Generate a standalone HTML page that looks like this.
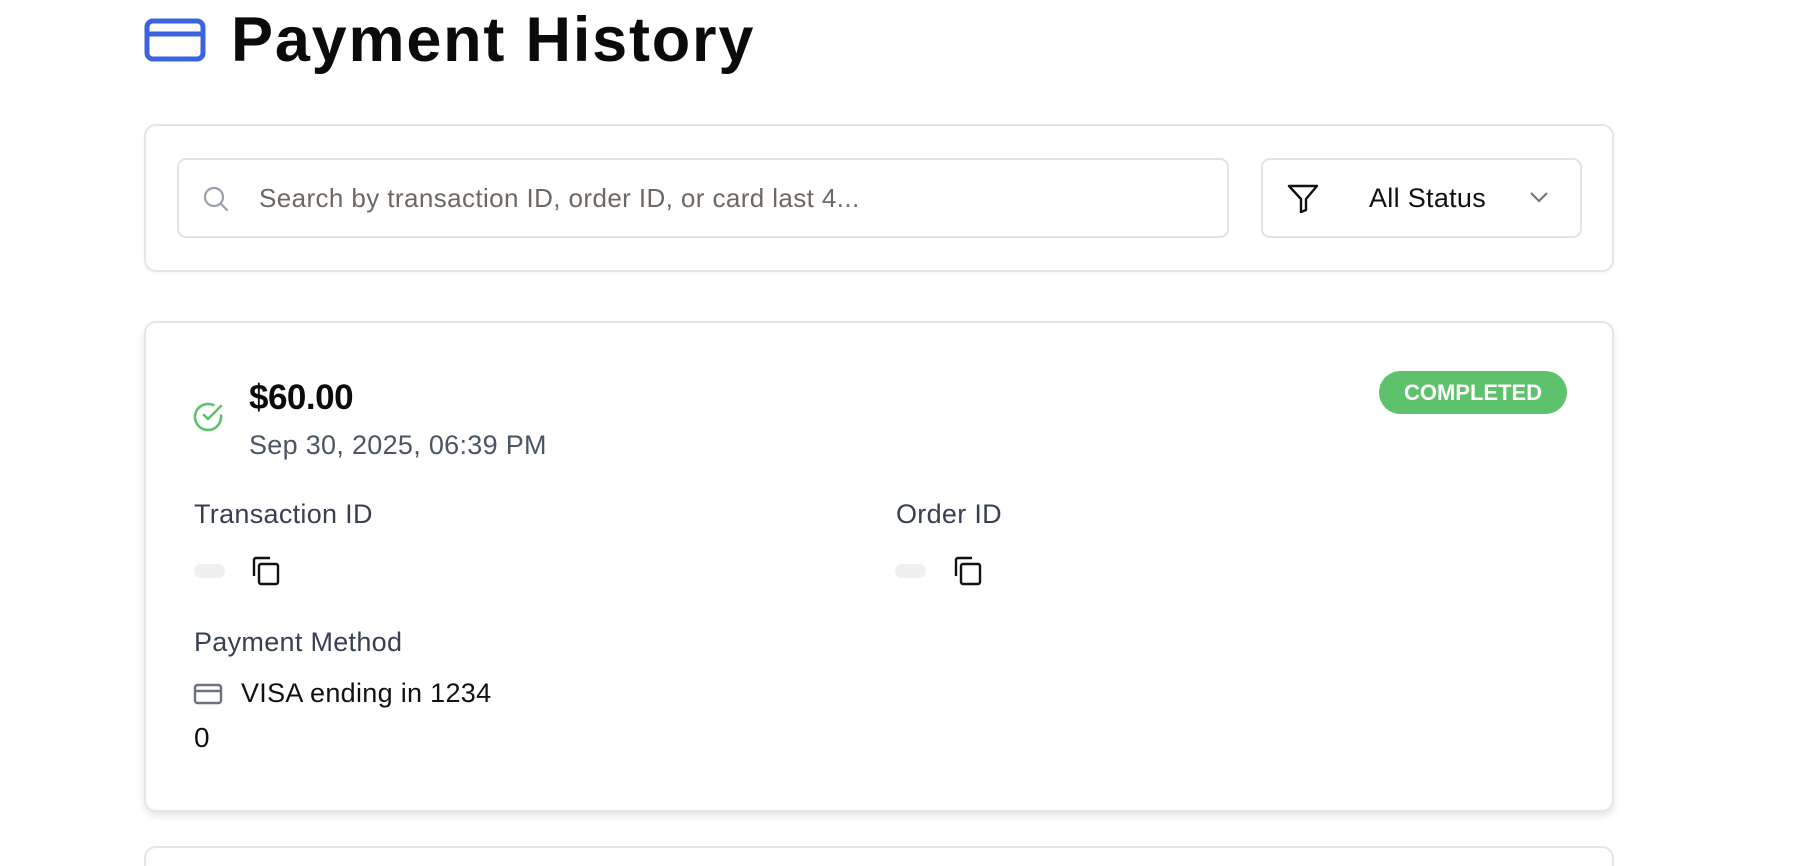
<!DOCTYPE html>
<html style="height:866px;overflow:hidden"><head><style>
*{box-sizing:border-box;margin:0;padding:0}
body{width:1806px;height:866px;background:#fff;font-family:"Liberation Sans",sans-serif;position:relative;overflow:hidden;color:#111}
.a{position:absolute}
.card{border:2px solid #e5e5e5;border-radius:12px;background:#fff}
</style></head><body>
<svg class="a" style="left:144px;top:18px" width="62" height="44" viewBox="0 0 62 44"><rect x="3" y="3" width="56" height="38" rx="6" fill="none" stroke="#3b63e0" stroke-width="5"/><line x1="3" y1="16" x2="59" y2="16" stroke="#3b63e0" stroke-width="5"/></svg>
<div class="a" style="left:231px;top:4px;font-size:63px;font-weight:bold;letter-spacing:1.8px;color:#0b0b0b">Payment History</div>

<div class="a card" style="left:144px;top:124px;width:1470px;height:148px;box-shadow:0 1px 3px rgba(0,0,0,.06)"></div>
<div class="a" style="left:177px;top:158px;width:1052px;height:80px;border:2px solid #e3e3e3;border-radius:9px"></div>
<svg class="a" style="left:202px;top:185px" width="28" height="28" viewBox="0 0 28 28"><circle cx="12" cy="12" r="9" fill="none" stroke="#9aa0aa" stroke-width="2.2"/><line x1="19" y1="19" x2="25" y2="25" stroke="#9aa0aa" stroke-width="2.2" stroke-linecap="round"/></svg>
<div class="a" style="left:259px;top:183px;font-size:26px;letter-spacing:0.4px;color:#6e6863">Search by transaction ID, order ID, or card last 4...</div>
<div class="a" style="left:1261px;top:158px;width:321px;height:80px;border:2px solid #e3e3e3;border-radius:9px"></div>
<svg class="a" style="left:1287px;top:183px" width="32" height="30" viewBox="0 0 32 30"><path d="M2 3H30L19 16V27L14 29V16Z" fill="none" stroke="#111" stroke-width="2.4" stroke-linejoin="round"/></svg>
<div class="a" style="left:1369px;top:183px;font-size:27px;letter-spacing:0.3px;color:#111">All Status</div>
<svg class="a" style="left:1528px;top:190px" width="22" height="14" viewBox="0 0 22 14"><path d="M3 3L11 11L19 3" fill="none" stroke="#777" stroke-width="2.2"/></svg>

<div class="a card" style="left:144px;top:321px;width:1470px;height:491px;box-shadow:0 4px 8px rgba(0,0,0,.1)"></div>
<div class="a" style="left:144px;top:846px;width:1470px;height:20px;border:2px solid #e5e5e5;border-bottom:none;border-radius:12px 12px 0 0;background:#fff"></div>
<svg class="a" style="left:192px;top:401px" width="32" height="32" viewBox="0 0 32 32"><path d="M29 14.5V16a13 13 0 1 1-7.7-11.9" fill="none" stroke="#5ec16c" stroke-width="2.6" stroke-linecap="round"/><path d="M29 5L16 18l-4-4" fill="none" stroke="#5ec16c" stroke-width="2.6" stroke-linecap="round" stroke-linejoin="round"/></svg>
<div class="a" style="left:249px;top:378px;font-size:35px;font-weight:bold;letter-spacing:-0.5px;color:#0b0b0b">$60.00</div>
<div class="a" style="left:249px;top:430px;font-size:27px;letter-spacing:0.3px;color:#4b5563">Sep 30, 2025, 06:39 PM</div>
<div class="a" style="left:194px;top:499px;font-size:27px;letter-spacing:0.3px;color:#374151">Transaction ID</div>
<div class="a" style="left:896px;top:499px;font-size:27px;letter-spacing:0.3px;color:#374151">Order ID</div>
<div class="a" style="left:194px;top:564px;width:31px;height:14px;border-radius:7px;background:#f0f0f0"></div>
<div class="a" style="left:895px;top:564px;width:31px;height:14px;border-radius:7px;background:#f0f0f0"></div>
<svg class="a" style="left:250px;top:555px" width="32" height="32" viewBox="0 0 32 32"><rect x="9" y="9" width="19" height="20" rx="2" fill="none" stroke="#111" stroke-width="2.4"/><path d="M4 21V5a2 2 0 0 1 2-2h14" fill="none" stroke="#111" stroke-width="2.4"/></svg>
<svg class="a" style="left:952px;top:555px" width="32" height="32" viewBox="0 0 32 32"><rect x="9" y="9" width="19" height="20" rx="2" fill="none" stroke="#111" stroke-width="2.4"/><path d="M4 21V5a2 2 0 0 1 2-2h14" fill="none" stroke="#111" stroke-width="2.4"/></svg>
<div class="a" style="left:194px;top:627px;font-size:27px;letter-spacing:0.3px;color:#374151">Payment Method</div>
<svg class="a" style="left:193px;top:682px" width="30" height="24" viewBox="0 0 30 24"><rect x="2" y="3" width="26" height="18" rx="2.5" fill="none" stroke="#6b7280" stroke-width="2.4"/><line x1="2" y1="9" x2="28" y2="9" stroke="#6b7280" stroke-width="2.4"/></svg>
<div class="a" style="left:241px;top:678px;font-size:27px;letter-spacing:0.3px;color:#111">VISA ending in 1234</div>
<div class="a" style="left:194px;top:722px;font-size:28px;color:#111">0</div>
<div class="a" style="left:1379px;top:371px;width:188px;height:43px;border-radius:22px;background:#5ec16c;color:#fff;font-weight:bold;font-size:22px;text-align:center;line-height:43px">COMPLETED</div>
</body></html>
